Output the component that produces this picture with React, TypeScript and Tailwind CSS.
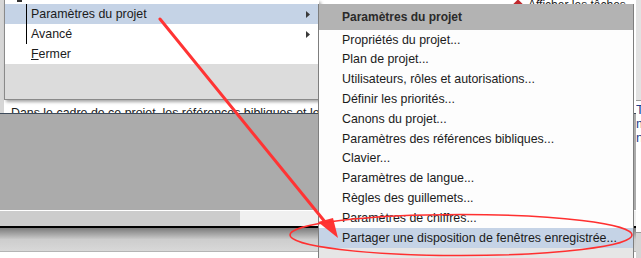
import React from "react";

const Arrow = () => (
  <svg width="4" height="7" viewBox="0 0 4 7" className="block">
    <path d="M0 0 L4 3.5 L0 7 Z" fill="#3a3a3a" />
  </svg>
);

const subItems = [
  "Propriétés du projet...",
  "Plan de projet...",
  "Utilisateurs, rôles et autorisations...",
  "Définir les priorités...",
  "Canons du projet...",
  "Paramètres des références bibliques...",
  "Clavier...",
  "Paramètres de langue...",
  "Règles des guillemets...",
  "Paramètres de chiffres...",
];

export default function App() {
  return (
    <div className="relative w-[641px] h-[258px] overflow-hidden bg-white font-['Liberation_Sans',Arial,sans-serif] text-[12.4px] text-[#1b1b1b]">
      {/* Background window */}
      <div className="flex w-full h-full">
        <div className="flex flex-col w-[636px] shrink-0">
          <div className="flex h-[113px]">
            <div className="w-[4px] bg-[#d6d6d6]" />
            <div className="flex-1 flex flex-col bg-white">
              <div className="h-[4px] overflow-hidden relative flex items-end pl-[510px]">
                <div className="flex items-center gap-[6px] -mb-[8px]">
                  <span className="w-[8px] h-[8px] bg-[#c0282d] rotate-45" />
                  <span className="text-[12px] leading-[14px] whitespace-nowrap">Afficher les tâches</span>
                </div>
              </div>
              <div className="flex-1" />
              <div className="h-[10px] overflow-hidden pl-[7px] pt-[3px] whitespace-nowrap leading-[14px]">
                Dans le cadre de ce projet, les références bibliques et les livres sont indiqués
              </div>
            </div>
          </div>
          <div className="h-[1px] bg-[#3e4b5b]" />
          <div className="h-[96px] bg-[#ababab]" />
          <div className="h-[1px] bg-white" />
          <div className="flex h-[15px]">
            <div className="w-[240px] bg-[#cccccc]" />
            <div className="flex-1 bg-[#f0f0f0]" />
          </div>
          <div className="h-[2px] bg-black" />
          <div className="h-[23px] bg-gradient-to-b from-[#7c7c7c] via-[#cdcdcd] to-[#d8d8d8]" />
          <div className="h-[1px] bg-[#b4b4b4]" />
          <div className="flex-1 bg-white" />
        </div>
        <div className="flex-1 flex flex-col">
          <div className="h-[100px] bg-[#e2e2e2]" />
          <div className="h-[1px] bg-[#9a9a9a]" />
          <div className="flex-1 bg-white text-[#1f3f8a] text-[13px] leading-[14px] pt-[2px] overflow-hidden">
            <div>T</div>
            <div>m</div>
            <div>n</div>
          </div>
          <div className="h-[1px] bg-[#9a9a9a]" />
          <div className="h-[25px] bg-[#d5d5d5]" />
        </div>
      </div>

      {/* Left menu */}
      <div className="absolute left-[4px] top-0 w-[315px] h-[100px] flex flex-col bg-white border-l border-b border-[#8a8a8a] shadow-[2px_2px_3px_rgba(0,0,0,0.35)]">
        <div className="h-[4px] relative">
          <div className="absolute left-[12px] top-0 w-[5px] h-[2px] bg-[#333]" />
        </div>
        <div className="h-[20px] flex items-center bg-[#c5d3e6] relative">
          <div className="absolute left-[21px] top-0 w-[1px] h-[20px] bg-black" />
          <span className="pl-[26px] flex-1">Paramètres du projet</span>
          <span className="pr-[9px]"><Arrow /></span>
        </div>
        <div className="h-[20px] flex items-center relative">
          <div className="absolute left-[21px] top-0 w-[1px] h-[20px] bg-black" />
          <span className="pl-[26px] flex-1">Avancé</span>
          <span className="pr-[9px]"><Arrow /></span>
        </div>
        <div className="h-[20px] flex items-center">
          <span className="pl-[26px]"><span className="underline">F</span>ermer</span>
        </div>
        <div className="flex-1 bg-[#dcdcdc]" />
      </div>

      {/* Submenu */}
      <div className="absolute left-[318px] top-[4px] w-[316px] h-[260px] flex flex-col bg-[#fdfdfd] border-x border-[#7e7e7e]">
        <div className="h-[26px] bg-[#b3b3b3] flex items-center pl-[23px] font-bold text-[12px] text-[#2a2a2a]">
          Paramètres du projet
        </div>
        {subItems.map((t) => (
          <div key={t} className="h-[19.8px] flex items-center pl-[23px] whitespace-nowrap">
            {t}
          </div>
        ))}
        <div className="h-[19.8px] flex items-center pl-[23px] bg-[#c5d3e6] whitespace-nowrap">
          Partager une disposition de fenêtres enregistrée...
        </div>
        <div className="flex-1 bg-[#e6e6e6]" />
      </div>

      {/* Red annotations */}
      <svg className="absolute inset-0 pointer-events-none" width="641" height="258" viewBox="0 0 641 258">
        <line x1="160" y1="19" x2="330" y2="228" stroke="#ff3434" strokeWidth="3" strokeLinecap="round" />
        <polygon points="338,238 318,222 333,218" fill="#ff3434" />
        <ellipse cx="461" cy="235" rx="171" ry="20.5" fill="none" stroke="#ff3030" strokeWidth="1.6" />
      </svg>
    </div>
  );
}
